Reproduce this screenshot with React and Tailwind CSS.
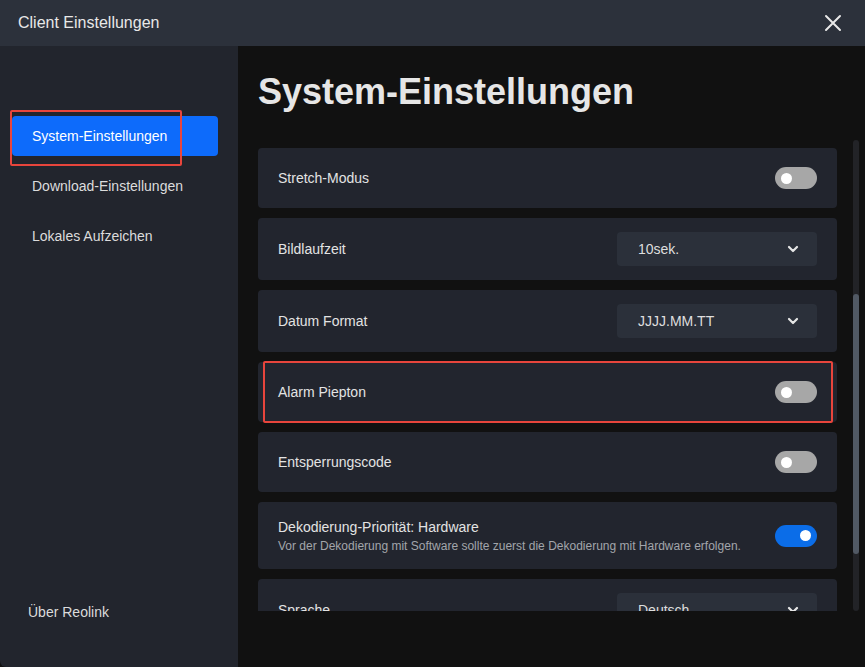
import React from "react";

const Toggle = ({ on }) => (
  <div
    className={
      "w-[42px] h-[22px] rounded-full flex items-center px-[6px] " +
      (on ? "bg-[#0b6de8] justify-end" : "bg-[#a7a7a7] justify-start")
    }
  >
    <div className="w-[11px] h-[11px] rounded-full bg-white" />
  </div>
);

const Chevron = () => (
  <svg width="12" height="8" viewBox="0 0 12 8" fill="none">
    <path d="M2 2 L6 6 L10 2" stroke="#e6e6e6" strokeWidth="2.2" strokeLinecap="round" strokeLinejoin="round" />
  </svg>
);

const Select = ({ value }) => (
  <div className="w-[200px] h-[34px] rounded-[4px] bg-[#2b303a] flex items-center justify-between pl-[21px] pr-[18px] text-[14px] text-[#dedede]">
    <span>{value}</span>
    <Chevron />
  </div>
);

const Card = ({ children, h }) => (
  <div className={"rounded-[4px] bg-[#22252e] flex items-center justify-between pl-[20px] pr-[20px] shrink-0 " + h}>
    {children}
  </div>
);

const Label = ({ children }) => <span className="text-[14px] text-[#e3e3e3]">{children}</span>;

export default function App() {
  return (
    <div
      className="relative w-[865px] h-[667px] flex flex-col bg-[#111111] overflow-hidden"
      style={{ fontFamily: '"Liberation Sans", Arial, sans-serif' }}
    >
      {/* Header */}
      <div className="h-[46px] shrink-0 bg-[#2c313b] flex items-center justify-between pl-[18px] pr-[23px]">
        <span className="text-[16px] text-[#e8e8e8]">Client Einstellungen</span>
        <svg width="18" height="18" viewBox="0 0 18 18">
          <path d="M2 2 L16 16 M16 2 L2 16" stroke="#e8e8e8" strokeWidth="2" strokeLinecap="round" />
        </svg>
      </div>

      <div className="flex flex-1 min-h-0">
        {/* Sidebar */}
        <div className="w-[238px] shrink-0 bg-[#22252d] flex flex-col justify-between pt-[70px] pb-[45px] rounded-bl-[6px]">
          <div className="flex flex-col gap-[10px] pl-[12px] pr-[20px]">
            <div className="h-[40px] rounded-[4px] bg-[#0d6bfb] flex items-center pl-[20px] text-[14px] text-white">
              System-Einstellungen
            </div>
            <div className="h-[40px] flex items-center pl-[20px] text-[14px] text-[#dcdcdc]">
              Download-Einstellungen
            </div>
            <div className="h-[40px] flex items-center pl-[20px] text-[14px] text-[#dcdcdc]">
              Lokales Aufzeichen
            </div>
          </div>
          <div className="pl-[28px] h-[20px] flex items-center text-[14px] text-[#dcdcdc]">Über Reolink</div>
        </div>

        {/* Main */}
        <div className="flex-1 flex flex-col pl-[20px] pt-[25px]">
          <h1 className="text-[36px] leading-[42px] font-bold text-[#e6e6e6] mb-[27px]">System-Einstellungen</h1>
          <div className="flex h-[471px] gap-[16px]">
            <div className="w-[579px] overflow-hidden flex flex-col gap-[10px] pt-[8px]">
              <Card h="h-[60px]">
                <Label>Stretch-Modus</Label>
                <Toggle />
              </Card>
              <Card h="h-[62px]">
                <Label>Bildlaufzeit</Label>
                <Select value="10sek." />
              </Card>
              <Card h="h-[62px]">
                <Label>Datum Format</Label>
                <Select value="JJJJ.MM.TT" />
              </Card>
              <Card h="h-[60px]">
                <Label>Alarm Piepton</Label>
                <Toggle />
              </Card>
              <Card h="h-[60px]">
                <Label>Entsperrungscode</Label>
                <Toggle />
              </Card>
              <Card h="h-[67px]">
                <div className="flex flex-col gap-[4px]">
                  <span className="text-[14px] text-[#e3e3e3] leading-[16px]">Dekodierung-Priorität: Hardware</span>
                  <span className="text-[12px] text-[#a2a5ab] leading-[14px]">
                    Vor der Dekodierung mit Software sollte zuerst die Dekodierung mit Hardware erfolgen.
                  </span>
                </div>
                <Toggle on />
              </Card>
              <Card h="h-[62px]">
                <Label>Sprache</Label>
                <Select value="Deutsch" />
              </Card>
            </div>
            <div className="w-[6px] h-full rounded-full bg-[#222327] flex flex-col">
              <div className="mt-[154px] h-[260px] rounded-full bg-[#515964]" />
            </div>
          </div>
        </div>
      </div>

      {/* Annotation highlight boxes */}
      <div className="absolute left-[10px] top-[110px] w-[172px] h-[56px] border-2 border-[#e8453c] rounded-[2px] pointer-events-none" />
      <div className="absolute left-[263px] top-[361px] w-[570px] h-[62px] border-2 border-[#e8453c] rounded-[2px] pointer-events-none" />
    </div>
  );
}
